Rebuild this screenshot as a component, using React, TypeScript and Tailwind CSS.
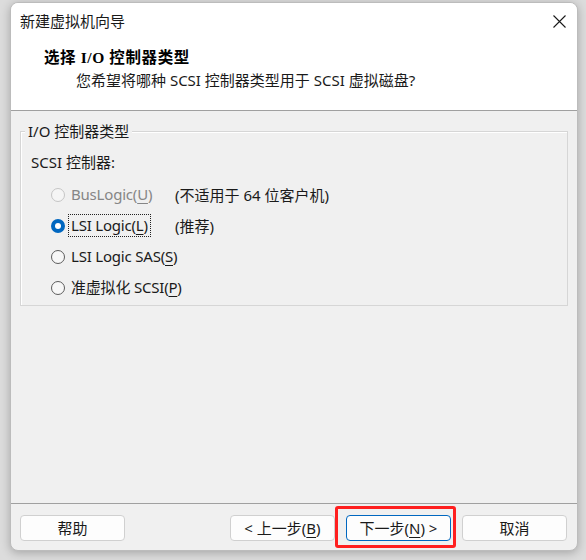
import React from "react";

const FONT = '"Segoe UI", "Noto Sans", "Noto Sans CJK SC", sans-serif';

function Radio({ state }: { state: "on" | "off" | "disabled" }) {
  if (state === "on") {
    return (
      <span className="flex h-[14px] w-[14px] shrink-0 items-center justify-center rounded-full bg-[#0067c0]">
        <span className="h-[6px] w-[6px] rounded-full bg-white" />
      </span>
    );
  }
  if (state === "disabled") {
    return <span className="h-[14px] w-[14px] shrink-0 rounded-full border border-[#c5c5c5] bg-[#f5f5f5]" />;
  }
  return <span className="h-[14px] w-[14px] shrink-0 rounded-full border border-[#5c5c5c] bg-[#f7f7f7]" />;
}

function Row({
  state,
  label,
  mn,
  note,
  focus,
}: {
  state: "on" | "off" | "disabled";
  label: string;
  mn: string;
  note?: string;
  focus?: boolean;
}) {
  const color = state === "disabled" ? "text-[#868686]" : "text-[#1a1a1a]";
  return (
    <div className="flex h-[31px] items-center whitespace-nowrap">
      <Radio state={state} />
      <div className={`ml-[6px] w-[104px] shrink-0 whitespace-nowrap tracking-[-0.2px] ${color}`}>
        <span
          className={`-ml-[2px] inline-block px-[2px] leading-[21px] ${
            focus ? "outline outline-1 outline-dotted outline-[#222]" : ""
          }`}
        >
          {label}(<u className="underline-offset-[3px]">{mn}</u>)
        </span>
      </div>
      {note && <span className="whitespace-nowrap text-[#1a1a1a]">{note}</span>}
    </div>
  );
}

function Button({ children, primary }: { children: React.ReactNode; primary?: boolean }) {
  return (
    <button
      className={`flex h-[26px] w-[105px] items-center justify-center whitespace-nowrap rounded-[4px] border bg-[#fdfdfd] text-[15px] leading-[20px] text-[#1a1a1a] ${
        primary ? "border-[#0067c0]" : "border-[#d0d0d0]"
      }`}
      style={{ fontFamily: FONT }}
    >
      {children}
    </button>
  );
}

export default function App() {
  return (
    <div
      className="relative h-[560px] w-[586px] overflow-hidden bg-[#dcdcdc] pl-[10px] pt-[2px]"
      style={{ fontFamily: FONT }}
    >
      <div className="flex h-[549px] w-[568px] flex-col overflow-hidden rounded-[8px] border border-[#bcbcbc] bg-[#f0f0f0] text-[15px] leading-[20px] shadow-[0_2px_10px_rgba(0,0,0,0.25)]">
        {/* header */}
        <div className="h-[108px] shrink-0 border-b border-[#a0a0a0] bg-white">
          <div className="flex h-[36px] items-center justify-between pl-[9px] pr-[11px]">
            <span className="text-[#1a1a1a]">新建虚拟机向导</span>
            <svg width="13" height="13" viewBox="0 0 13 13">
              <path d="M0.5 0.5 L12.5 12.5 M12.5 0.5 L0.5 12.5" stroke="#1a1a1a" strokeWidth="1.1" />
            </svg>
          </div>
          <div
            className="mt-[9px] pl-[33px] text-[15.5px] font-bold tracking-[0.6px] text-black"
            style={{ fontFamily: '"Liberation Serif", "Noto Sans CJK SC", serif' }}
          >
            选择 I/O 控制器类型
          </div>
          <div className="mt-[2px] pl-[65px] text-[#1a1a1a]">您希望将哪种 SCSI 控制器类型用于 SCSI 虚拟磁盘?</div>
        </div>

        {/* body */}
        <div className="flex-1 px-[9px] pt-[20px]">
          <div className="relative border border-[#d6d6d6] pb-[2px] pl-[30px] pt-[20px] shadow-[inset_1px_1px_0_#ffffff]">
            <span className="absolute -top-[11px] left-[4px] bg-[#f0f0f0] px-[3px] text-[#1a1a1a]">
              I/O 控制器类型
            </span>
            <div className="-ml-[20px] text-[#1a1a1a]">SCSI 控制器:</div>
            <div className="mt-[7px]">
              <Row state="disabled" label="BusLogic" mn="U" note="(不适用于 64 位客户机)" />
              <Row state="on" label="LSI Logic" mn="L" note="(推荐)" focus />
              <Row state="off" label="LSI Logic SAS" mn="S" />
              <Row state="off" label="准虚拟化 SCSI" mn="P" />
            </div>
          </div>
        </div>

        {/* footer */}
        <div className="h-[47px] shrink-0 border-t border-[#a0a0a0] pt-[11px]">
          <div className="flex items-start pl-[9px] pr-[10px]">
            <Button>帮助</Button>
            <div className="ml-auto flex gap-[11px]">
              <Button>
                &lt; 上一步(<u className="underline-offset-[3px]">B</u>)
              </Button>
              <Button primary>
                下一步(<u className="underline-offset-[3px]">N</u>) &gt;
              </Button>
              <Button>取消</Button>
            </div>
          </div>
        </div>
      </div>

      {/* red annotation box */}
      <div className="pointer-events-none absolute left-[335px] top-[506px] h-[42px] w-[121px] rounded-[3px] border-[3px] border-[#ff1f1f]" />
    </div>
  );
}
